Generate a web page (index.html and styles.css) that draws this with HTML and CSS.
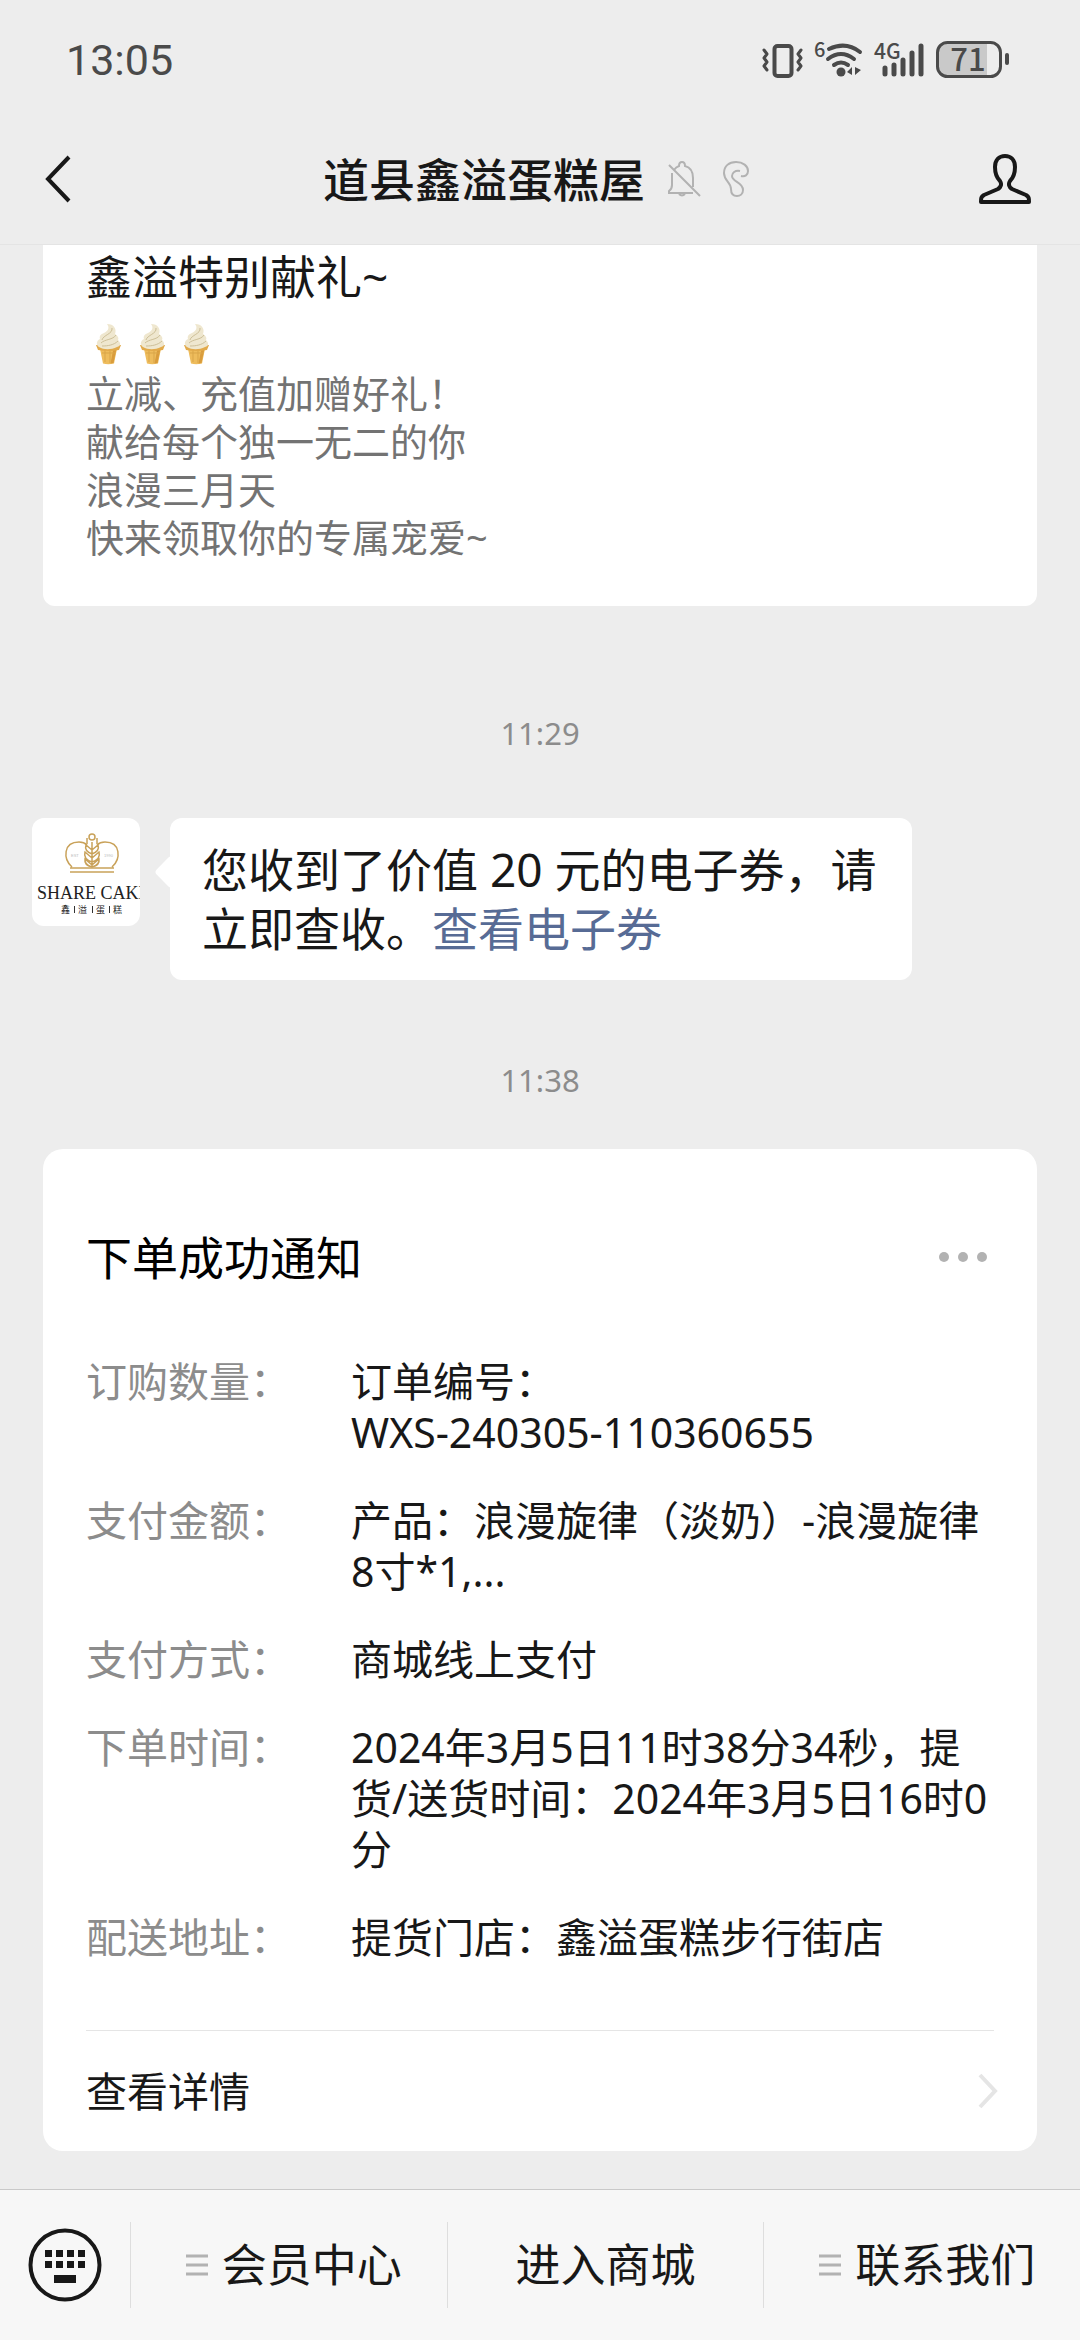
FILE: index.html
```html
<!DOCTYPE html>
<html lang="zh-CN">
<head>
    <meta charset="UTF-8">
    <meta name="viewport" content="width=device-width">
    <title>道县鑫溢蛋糕屋</title>
    <link rel="stylesheet" href="styles.css">
</head>
<body>
<svg class="defs" width="0" height="0">
    <symbol id="icecream" viewBox="0 0 44 44">
        <path d="M13 22h19l-4 19.500q-6 1.500-11 0z" fill="#eebc5c"/>
        <path d="M28 24h3l-3.500 17-3 .5z" fill="#d99c3c"/>
        <path d="M16 31h13M19 26v14M24 26v15" stroke="#d9a548" fill="none"/>
        <path d="M10 23h25l-2 5q-10 2-21 0z" fill="#e2aa4b"/>
        <path d="M21 2c7 0 10 5 8 10c3 2 4 4 3 6c3 3 3 6-1 7c-6 3-13 3-18 0c-3-2-3-6 1-8c-1-3 1-5 4-6c4-2 6-5 3-9z" fill="#efe7cf"/>
        <path d="M26 6c1 6-9 7-10 12M30 13c-3 5-11 4-15 8M32 19c-4 4-10 5-16 5" stroke="#cdbf98" fill="none"/>
    </symbol>
</svg>
<header id="header">
    <div class="status">
        <span class="clock">13:05</span>
        <div class="status-icons">
            <svg width="42" height="40" viewBox="764 40 42 40" fill="none" stroke="#4a4a4a" stroke-width="4">
                <rect x="776.500" y="46" width="17" height="30" rx="3"/>
                <path d="M766 50l3 4-3 4 3 4-3 4 3 4M803 50l-3 4 3 4-3 4 3 4-3 4" stroke-linecap="round" stroke-linejoin="round" stroke-width="3"/>
            </svg>
            <svg class="wifi" width="50" height="40" viewBox="815 40 50 40" fill="none" stroke="#4a4a4a" stroke-width="4" stroke-linecap="round">
                <path d="M830 49Q847 41 861 52M829 59Q842 49 855 59M835 65Q842 60 849 65"/>
                <circle cx="842" cy="72" r="4.500" fill="#4a4a4a" stroke="none"/>
                <path d="M853 67v8l-5-3zM856 67v8l6-5z" fill="#4a4a4a" stroke="none"/>
                <text x="815" y="57" font-size="20" font-weight="500">6</text>
            </svg>
            <svg class="signal" width="52" height="40" viewBox="873 40 52 40">
                <text x="873" y="59" font-size="21" font-weight="500">4G</text>
                <path d="M884 68v6M893 65v9M902 60v14M911 53v21M920 46v28" stroke="#4a4a4a" stroke-width="5" stroke-linecap="round"/>
            </svg>
            <svg class="battery" width="74" height="40" viewBox="936 40 74 40">
                <path d="M947 42h40v35h-40q-9 0-9-9v-17q0-9 9-9z" fill="#c9c9c9"/>
                <rect x="937.500" y="42.500" width="63" height="34" rx="10" fill="none" stroke="#4a4a4a" stroke-width="3"/>
                <rect x="1005" y="53" width="4" height="12" rx="2" fill="#4a4a4a"/>
                <text x="968" y="71" font-size="31" font-weight="500" text-anchor="middle">71</text>
            </svg>
        </div>
    </div>
    <div class="nav">
        <button class="back" type="button" aria-label="返回">
            <svg width="26" height="48" viewBox="0 0 26 48" fill="none" stroke="#181818" stroke-width="4"><path d="M24 2L3 24l21 22"/></svg>
        </button>
        <div class="nav-title">
            <h1>道县鑫溢蛋糕屋</h1>
            <svg width="34" height="36" viewBox="0 0 34 36" fill="none" stroke="#b2b2b2" stroke-width="2">
                <path d="M2 4l31 31M7 9q2-3 5-4q0-4 3-4t3 4q8 2 8 12v9M5 12v12q0 4-3 6v2h24M12 33q3 3 6 0"/>
            </svg>
            <svg width="26" height="36" viewBox="0 0 26 36" fill="none" stroke="#b2b2b2" stroke-width="2">
                <path d="M17 10C12 9 9 12 9 15C9 21 20 21 20 29C20 33 17 35 14 35C10 35 8 32 8 28C8 21 1 20 1 12C1 5 6 1 13 1C20 1 25 5 25 10C25 14 22 16 18 15"/>
            </svg>
        </div>
        <button class="profile" type="button" aria-label="公众号资料">
            <svg width="52" height="51" viewBox="0 0 52 51" fill="none" stroke="#181818" stroke-width="4" stroke-linejoin="round">
                <path d="M26 2C20 2 16 6 16 13C16 20 18 24 21 27C23 30 22 33 19 35L5 41C2 43 2 44 2 48H50C50 44 50 43 47 41L33 35C30 33 29 30 31 27C34 24 36 20 36 13C36 6 32 2 26 2Z"/>
            </svg>
        </button>
    </div>
</header>

<main id="chat">
    <section class="card promo">
        <h2>鑫溢特别献礼~</h2>
        <div class="cones">
            <svg width="44" height="44"><use href="#icecream"/></svg>
            <svg width="44" height="44"><use href="#icecream"/></svg>
            <svg width="44" height="44"><use href="#icecream"/></svg>
        </div>
        <p>立减、充值加赠好礼！</p>
        <p>献给每个独一无二的你</p>
        <p>浪漫三月天</p>
        <p>快来领取你的专属宠爱~</p>
    </section>

    <time>11:29</time>

    <div class="message">
        <svg class="avatar" width="108" height="108" viewBox="0 0 108 108">
            <rect width="108" height="108" fill="#fff"/>
            <g fill="none" stroke="#c9a25a" stroke-width="1.500">
                <path d="M40 49C31 41 31 24 47 24Q52 24 55 27M80 49C89 41 89 24 73 24Q68 24 65 27M38 50h44M38 54h44"/>
                <circle cx="60" cy="19" r="3"/>
                <path d="M60 24v25M60 32l-6-5q-2 6 6 9q8-3 6-9l-6 5M60 40l-7-6q-2 7 7 10q9-3 7-10l-7 6M60 47l-7-6q-1 6 7 8q8-2 7-8l-7 6M55 20v6M65 20v6"/>
            </g>
            <text class="logo-year" x="39" y="39">EST</text>
            <text class="logo-year" x="72" y="39">1990</text>
            <text class="logo-en" x="5" y="81">SHARE CAKE</text>
            <text class="logo-cn" x="29" y="95">鑫</text>
            <text class="logo-cn" x="46" y="95">溢</text>
            <text class="logo-cn" x="64" y="95">蛋</text>
            <text class="logo-cn" x="81" y="95">糕</text>
            <path d="M42.500 88v7M60.500 88v7M77.500 88v7" stroke="#333"/>
        </svg>
        <div class="bubble">您收到了价值 20 元的电子券，请立即查收。<a href="#">查看电子券</a></div>
    </div>

    <time>11:38</time>

    <section class="card order">
        <div class="order-head">
            <h2>下单成功通知</h2>
            <button type="button" aria-label="更多">
                <svg width="50" height="12" viewBox="0 0 50 12" fill="#b2b2b2"><circle cx="6" cy="6" r="5"/><circle cx="25" cy="6" r="5"/><circle cx="44" cy="6" r="5"/></svg>
            </button>
        </div>
        <dl>
            <dt>订购数量：</dt>
            <dd>订单编号：<br>WXS-240305-110360655</dd>
            <dt>支付金额：</dt>
            <dd>产品：浪漫旋律（淡奶）-浪漫旋律8寸*1,...</dd>
            <dt>支付方式：</dt>
            <dd>商城线上支付</dd>
            <dt>下单时间：</dt>
            <dd>2024年3月5日11时38分34秒，提货/送货时间：2024年3月5日16时0分</dd>
            <dt>配送地址：</dt>
            <dd>提货门店：鑫溢蛋糕步行街店</dd>
        </dl>
        <a class="detail" href="#">
            <span>查看详情</span>
            <svg width="20" height="36" viewBox="0 0 20 36" fill="none" stroke="#e5e5e5" stroke-width="4"><path d="M2 2l15 16L2 34"/></svg>
        </a>
    </section>
</main>

<footer id="menu">
    <button class="keyboard" type="button" aria-label="键盘">
        <svg width="74" height="74" viewBox="0 0 74 74" fill="#181818">
            <circle cx="37" cy="37" r="34.500" fill="none" stroke="#181818" stroke-width="4"/>
            <path d="M17 22h7v7h-7zM28 22h7v7h-7zM39 22h7v7h-7zM50 22h7v7h-7zM17 33h7v7h-7zM28 33h7v7h-7zM39 33h7v7h-7zM50 33h7v7h-7zM26 47h22v8H26z"/>
        </svg>
    </button>
    <button class="item" type="button">
        <svg width="22" height="22" viewBox="0 0 22 22" stroke="#b2b2b2" stroke-width="3"><path d="M0 2h22M0 11h22M0 20h22"/></svg>
        <span>会员中心</span>
    </button>
    <button class="item" type="button">进入商城</button>
    <button class="item" type="button">
        <svg width="22" height="22" viewBox="0 0 22 22" stroke="#b2b2b2" stroke-width="3"><path d="M0 2h22M0 11h22M0 20h22"/></svg>
        <span>联系我们</span>
    </button>
</footer>
</body>
</html>
```

FILE: styles.css
```css
*{
    margin: 0;
    padding: 0;
    box-sizing: border-box;
}
body{
    min-height: 100vh;
    display: flex;
    flex-direction: column;
    background: #ededed;
    color: #181818;
    font-family: "Noto Sans", "Noto Sans CJK SC", sans-serif;
}
svg{
    display: block;
    flex-shrink: 0;
}
.defs{
    position: absolute;
}
button{
    border: 0;
    background: none;
    color: inherit;
    font: inherit;
    cursor: pointer;
}
a{
    color: #576b95;
    text-decoration: none;
}
h1,h2{
    font-size: 46px;
    line-height: 60px;
    font-weight: 400;
}

/* header */
#header{
    border-bottom: 1px solid #e4e4e4;
}
.status{
    height: 120px;
    padding: 0 70px 0 66px;
    display: flex;
    align-items: center;
    justify-content: space-between;
    color: #4a4a4a;
}
.clock{
    font-family: Roboto, sans-serif;
    font-size: 43px;
}
.status-icons{
    display: flex;
    gap: 10px;
}
.status-icons svg{
    overflow: visible;
}
.status-icons text{
    fill: #4a4a4a;
    stroke: none;
    font-family: "Noto Sans CJK SC", sans-serif;
}
.nav{
    height: 124px;
    padding-bottom: 6px;
    display: flex;
    align-items: center;
}
.back{
    width: 112px;
    padding-left: 45px;
}
.nav-title{
    flex: 1;
    display: flex;
    align-items: center;
    justify-content: center;
    gap: 22px;
}
h1{
    font-weight: 500;
}
.profile{
    width: 120px;
    padding-left: 19px;
}

/* chat */
#chat{
    flex: 1;
    display: flex;
    flex-direction: column;
    padding: 0 43px 38px;
}
.card{
    background: #fff;
    padding: 0 43px;
}
.promo{
    padding-top: 1px;
    padding-bottom: 45px;
    margin-bottom: 27px;
    border-radius: 0 0 12px 12px;
}
.promo p{
    font-size: 38px;
    line-height: 48px;
    color: #737373;
}
.cones{
    display: flex;
    padding: 16px 0 3px;
}
time{
    margin: 76px 0 45px;
    font-size: 31px;
    line-height: 48px;
    color: #8c8c8c;
    text-align: center;
}
.message{
    display: flex;
    align-items: flex-start;
    gap: 30px;
    margin: 16px 0 0 -11px;
}
.avatar{
    border-radius: 12px;
}
.logo-en{
    font: 18px "Liberation Serif", serif;
    fill: #222;
}
.logo-cn{
    font: 9px "Noto Sans CJK SC", sans-serif;
    fill: #222;
}
.logo-year{
    font: 4px "Liberation Sans", sans-serif;
    fill: #bbb;
}
.bubble{
    position: relative;
    max-width: 742px;
    padding: 22px 32px;
    border-radius: 12px;
    background: #fff;
    font-size: 46px;
    line-height: 59px;
}
/* the little tail pointing at the avatar */
.bubble:before{
    content: "";
    position: absolute;
    left: -11px;
    top: 42px;
    width: 24px;
    height: 24px;
    border-radius: 4px;
    background: #fff;
    transform: rotate(45deg);
}

/* order card */
.order{
    padding-top: 78px;
    border-radius: 20px;
}
.order-head{
    display: flex;
    align-items: center;
    justify-content: space-between;
    padding-right: 6px;
    color: #000;
}
dl{
    display: grid;
    grid-template-columns: 265px 1fr;
    row-gap: 37px;
    padding: 69px 0 67px;
    font-size: 41px;
    line-height: 51px;
}
dt{
    color: #8c8c8c;
}
.detail{
    display: flex;
    align-items: center;
    justify-content: space-between;
    height: 120px;
    margin-right: -4px;
    color: #181818;
    font-size: 41px;
    line-height: 51px;
}
dl{
    border-bottom: 1px solid #e5e5e5;
}

/* bottom menu */
#menu{
    display: flex;
    padding: 32px 0;
    border-top: 1px solid #c9c9c9;
    background: #f7f7f7;
}
.keyboard{
    width: 130px;
    padding-left: 28px;
}
.item{
    flex: 1;
    display: flex;
    align-items: center;
    justify-content: center;
    gap: 14px;
    height: 86px;
    border-left: 1px solid #dedede;
    font-size: 45px;
    line-height: 60px;
}
.item svg{
    margin-left: 10px;
}
```
